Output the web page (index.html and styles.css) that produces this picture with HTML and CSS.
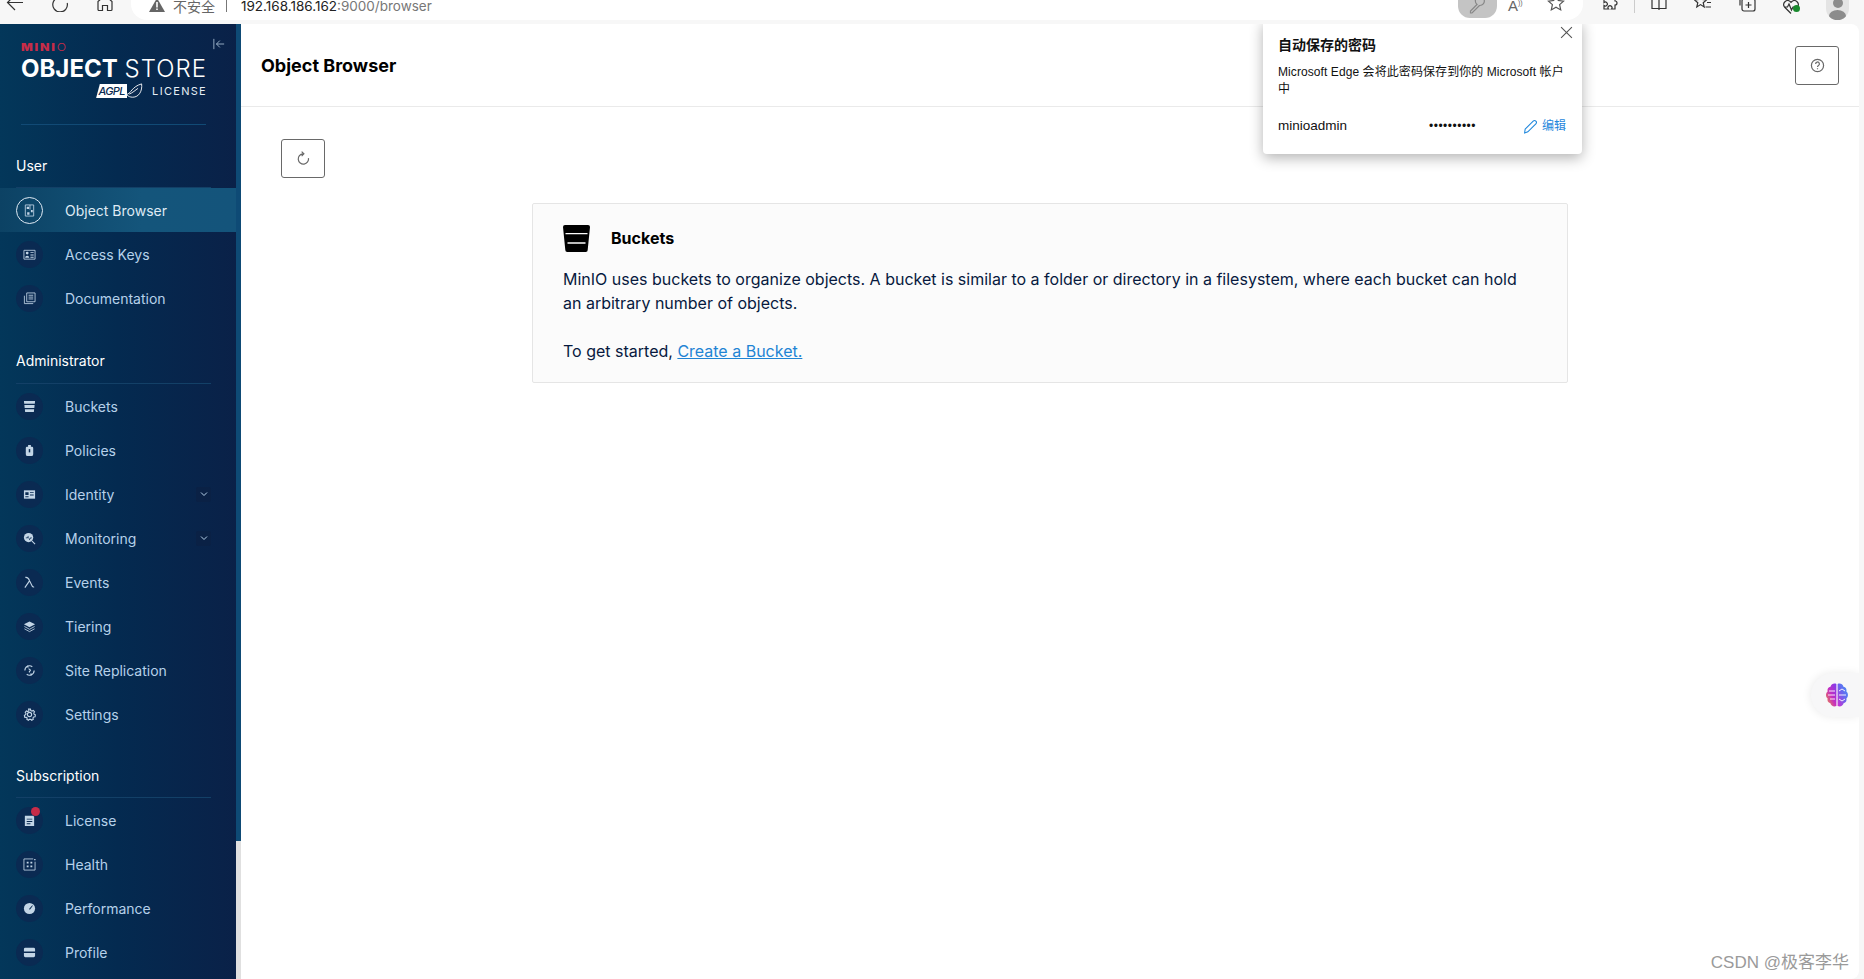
FILE: index.html
```html
<!DOCTYPE html>
<html lang="en">
<head>
<meta charset="utf-8">
<title>MinIO Console</title>
<link rel="stylesheet" href="styles.css">
</head>
<body>
<header class="toolbar">
  <svg class="tb-ic tb-back" viewBox="0 0 18 18"><path d="M9 1 1.500 8.500 9 16M2 8.500h15"/></svg>
  <svg class="tb-ic tb-reload" viewBox="0 0 18 18"><path d="M12.500 -0.500v5h-5M13 4.500A7.300 7.300 0 1 0 16.200 9"/></svg>
  <svg class="tb-ic tb-home" viewBox="0 0 18 18"><path d="M2 7.500 9 1.500l7 6V15.500a1 1 0 0 1-1 1h-3.500v-5h-5v5H3a1 1 0 0 1-1-1z"/></svg>
  <div class="address">
    <svg class="warn" viewBox="0 0 16 14"><path d="M8 0 16 14H0z"/><path class="warn-mark" d="M7.200 4h1.600v5.500H7.200zM7.200 10.500h1.600v1.600H7.200z"/></svg>
    <span class="insecure">不安全</span>
    <span class="addr-sep"></span>
    <span class="url">192.168.186.162<span class="url-dim">:9000/browser</span></span>
    <span class="addr-right">
      <span class="key-btn"><svg class="tb-ic tb-key" viewBox="0 0 18 18"><path d="M10.500 8.500 3 16H1.500v-2L8 7.500a4.500 4.500 0 1 1 2.500 1z"/></svg></span>
      <span class="read-aloud">A<sup>))</sup></span>
      <svg class="tb-ic tb-star" viewBox="0 0 18 18"><path d="m9 1.500 2.300 5 5.200.6-3.900 3.500 1.100 5.300L9 13.200l-4.700 2.700 1.100-5.300L1.500 7.100l5.200-.6z"/></svg>
    </span>
  </div>
  <div class="tb-right">
    <svg class="tb-ic" viewBox="0 0 18 18"><path d="M6 3h2a2 2 0 1 1 3 0h3v4a2 2 0 1 1 0 4v4h-3.500a2 2 0 1 0-3 0H3v-3.500a2 2 0 1 0 0-3V5a2 2 0 0 1 3-2z"/></svg>
    <span class="tb-sep"></span>
    <svg class="tb-ic" viewBox="0 0 18 18"><path d="M2 2h14v12.500H2zM9 2v14"/></svg>
    <svg class="tb-ic" viewBox="0 0 18 18"><path d="m6.500 1.500 1.700 4 4.300.4-3.300 2.800 1 4.200-3.700-2.300-3.700 2.300 1-4.200L.5 5.900l4.300-.4zM11.500 4H17M13 8.500h4M11.500 13H17"/></svg>
    <svg class="tb-ic" viewBox="0 0 18 18"><path d="M5 1.500A3 3 0 0 0 2 4.500v7M6 5h9a2 2 0 0 1 2 2v8a2 2 0 0 1-2 2H6a2 2 0 0 1-2-2V7a2 2 0 0 1 2-2zM10.500 8v6M7.500 11h6"/></svg>
    <span class="heart-wrap">
      <svg class="tb-ic" viewBox="0 0 18 18"><path d="M9 15.500 2.500 9a4 4 0 0 1 5.700-5.500L9 4.300l.8-.8A4 4 0 0 1 15.500 9M2.500 9h3l1.500-3 2.500 6 1.500-3h2"/></svg>
      <i class="heart-dot"></i>
    </span>
    <span class="avatar"><i class="avatar-head"></i><i class="avatar-body"></i></span>
  </div>
</header>

<div class="app">
  <aside class="sidebar">
    <div class="brand">
      <button class="collapse" aria-label="Collapse menu"><svg viewBox="0 0 14 14"><path d="M1 1v12M13 7H4M8 3 4 7l4 4"/></svg></button>
      <div class="minio"><b>MINI</b><span>O</span></div>
      <div class="product"><b>OBJECT</b> <span>STORE</span></div>
      <div class="license-line">
        <span class="agpl"><span class="agpl-text">AGPL</span></span>
        <svg class="agpl-leaf" viewBox="0 0 18 18"><path d="M0 13C5 12 6 4 17 1c1 8-3 15-10 15-3 0-5-1-7-3zM3 12.500C7 11 10 8 13 6"/></svg>
        <span class="license-word">LICENSE</span>
      </div>
    </div>

    <nav>
      <div class="group-title">User</div>
      <a class="item active"><span class="disc"><svg viewBox="0 0 14 14"><path class="ln" d="M2.500 1h9v12h-9zM7.500 1v5"/><path d="M4 3h2.500v2.500H4zM8.500 6.500H10.500V9H8.500zM4.500 9h2.500v2.500H4.500z"/></svg></span><span class="label">Object Browser</span></a>
      <a class="item"><span class="disc"><svg viewBox="0 0 14 14"><path class="ln" d="M1 2.500h12v9.500H1z"/><circle cx="4.500" cy="5.500" r="1.500"/><path d="M2.300 10.500c0-3 4.400-3 4.400 0zM8 4.500h3.500v1H8zM8 7h3.500v1H8zM8 9.500h3.500v1H8z"/></svg></span><span class="label">Access Keys</span></a>
      <a class="item"><span class="disc"><svg viewBox="0 0 14 14"><path class="ln" d="M4 1h9v9.500H4zM1.500 4v8.500H11M6 3.500h5M6 5.500h5M6 7.500h5"/></svg></span><span class="label">Documentation</span></a>

      <div class="group-title">Administrator</div>
      <a class="item"><span class="disc"><svg viewBox="0 0 14 14"><path d="M1 1h12l-.3 3H1.300zM1.500 5.500h11l-.3 3H1.800zM2 10h10l-.3 3H2.300z"/></svg></span><span class="label">Buckets</span></a>
      <a class="item"><span class="disc"><svg viewBox="0 0 14 14"><path d="M5.500 1h3v2H10a1.500 1.500 0 0 1 1 1.500V11a2 2 0 0 1-2 2H5a2 2 0 0 1-2-2V4.500A1.500 1.500 0 0 1 4 3h1.500z"/><path class="cut" d="M6.200 5.500h1.600v3.500H6.200z"/></svg></span><span class="label">Policies</span></a>
      <a class="item"><span class="disc"><svg viewBox="0 0 14 14"><path d="M1 2.500h12v9H1z"/><path class="cut" d="M2.500 4.500h3.500v3H2.500zM2.500 9h3.500v1H2.500zM7.500 4.500h4v1h-4zM7.500 7h4v1h-4z"/></svg></span><span class="label">Identity</span><span class="chev"><svg viewBox="0 0 10 10"><path d="m2 3.500 3 3 3-3"/></svg></span></a>
      <a class="item"><span class="disc"><svg viewBox="0 0 14 14"><circle cx="6" cy="6" r="5"/><path class="cut" d="M3 6h1.500l1-2 1.500 3.500 1-1.500h1.500v.8H8.400L7 9 5.500 5.500l-.5 1.300H3z"/><path class="ln ln-bold" d="m9.500 9.500 3.500 3.500"/></svg></span><span class="label">Monitoring</span><span class="chev"><svg viewBox="0 0 10 10"><path d="m2 3.500 3 3 3-3"/></svg></span></a>
      <a class="item"><span class="disc"><svg viewBox="0 0 14 14"><path class="ln ln-bold" d="M2.500 1.500c2.500-.5 3.500.5 4.500 3.500l3 6c.4.800 1 1 2 .8M6.800 5.500 2 12.500"/></svg></span><span class="label">Events</span></a>
      <a class="item"><span class="disc"><svg viewBox="0 0 14 14"><path d="m7 1.500 6 3.200-6 3.200-6-3.200z"/><path class="ln" d="m1.500 7 5.500 3 5.500-3M1.500 9.500l5.500 3 5.500-3"/></svg></span><span class="label">Tiering</span></a>
      <a class="item"><span class="disc"><svg viewBox="0 0 14 14"><path class="ln ln-bold" d="M2 7a5 5 0 0 1 8-4M12 7a5 5 0 0 1-8 4M5 1.500l.5 2.500M9 12.500 8.500 10M6 5l2 1.500L6.500 9"/></svg></span><span class="label">Site Replication</span></a>
      <a class="item"><span class="disc"><svg viewBox="0 0 14 14"><circle class="ln ln-bold" cx="7" cy="7" r="2.300"/><path class="ln ln-bold" d="M6 1.200h2l.4 1.500 1.300.6 1.400-.7 1.300 1.500-.8 1.300.4 1.300 1.300.7-.3 2-1.500.2-.8 1.200.4 1.400-1.700 1-1.100-1h-1.400l-1.100 1-1.700-1 .4-1.400L3.300 10.100l-1.500-.2-.3-2 1.300-.7.400-1.300-.8-1.300 1.300-1.500 1.400.7 1.300-.6z"/></svg></span><span class="label">Settings</span></a>

      <div class="group-title group-last">Subscription</div>
      <a class="item"><span class="disc"><svg viewBox="0 0 14 14"><path d="M2 2h9l1 1v10H2z"/><path class="cut" d="M4 5h6v1H4zM4 7.500h6v1H4zM4 10h4v1H4z"/></svg><i class="badge"></i></span><span class="label">License</span></a>
      <a class="item"><span class="disc"><svg viewBox="0 0 14 14"><path class="ln" d="M1 1h10M1 1v12h12V4"/><path d="M4 4h2v2H4zM8 4h2v2H8zM4 8h2v2H4zM8 8h2v2H8zM12 1h1.500v1.500H12z"/></svg></span><span class="label">Health</span></a>
      <a class="item"><span class="disc"><svg viewBox="0 0 14 14"><circle cx="7" cy="7" r="6"/><path class="cut" d="M6.500 7.500 10 3.500l.6.500-3.200 4.300z"/></svg></span><span class="label">Performance</span></a>
      <a class="item"><span class="disc"><svg viewBox="0 0 14 14"><path d="M2.500 2h9A1.500 1.500 0 0 1 13 3.500V6H1V3.500A1.500 1.500 0 0 1 2.500 2zM1 7.500h12V10.500A1.500 1.500 0 0 1 11.500 12h-9A1.500 1.500 0 0 1 1 10.500z"/></svg></span><span class="label">Profile</span></a>
    </nav>
  </aside>
  <div class="rail"><div class="rail-thumb"></div></div>

  <main class="content">
    <div class="page-head">
      <h1>Object Browser</h1>
      <button class="square-btn help"><svg viewBox="0 0 16 16"><circle cx="8" cy="8" r="6.500"/><path d="M6 6.300a2 2 0 1 1 3 1.700c-.7.500-1 .8-1 1.700M8 11v1"/></svg></button>
    </div>
    <div class="page-body">
      <div class="actions">
        <button class="square-btn refresh"><svg viewBox="0 0 16 16"><path d="M6 .6 8.400 3 6 5.400M7.500 3A5.500 5.500 0 1 0 13.300 7.500"/></svg></button>
      </div>
      <section class="card">
        <div class="card-head">
          <svg class="card-icon" viewBox="0 0 27 27"><path d="M2 0h23a2 2 0 0 1 2 2l-2.300 23a2 2 0 0 1-2 2H4.300a2 2 0 0 1-2-2L0 2a2 2 0 0 1 2-2z"/><path class="card-icon-line" d="M2.500 8.700h22M4.500 18h18"/></svg>
          <h2>Buckets</h2>
        </div>
        <p>MinIO uses buckets to organize objects. A bucket is similar to a folder or directory in a filesystem, where each bucket can hold an arbitrary number of objects.</p>
        <p class="started">To get started, <a href="#">Create a Bucket.</a></p>
      </section>
    </div>

    <div class="popup">
      <button class="popup-close" aria-label="Close"><svg viewBox="0 0 12 12"><path d="m1 1 10 10M11 1 1 11"/></svg></button>
      <div class="popup-title">自动保存的密码</div>
      <div class="popup-text">Microsoft Edge 会将此密码保存到你的 Microsoft 帐户中</div>
      <div class="popup-row">
        <span class="popup-user">minioadmin</span>
        <span class="popup-pass">••••••••••</span>
        <span class="popup-edit"><svg viewBox="0 0 14 14"><path d="M2 9.500 9.500 2a1.500 1.500 0 0 1 2.500 2.500L4.500 12 1.500 13z"/></svg>编辑</span>
      </div>
    </div>

    <div class="assistant">
      <svg viewBox="0 0 24 24">
        <defs>
          <linearGradient id="brainL" x1="0" y1="1" x2="1" y2="0"><stop offset="0" stop-color="#f0913a"/><stop offset=".5" stop-color="#c62fc0"/><stop offset="1" stop-color="#7a3cf0"/></linearGradient>
          <linearGradient id="brainR" x1="1" y1="0" x2="0" y2="1"><stop offset="0" stop-color="#3f9cf5"/><stop offset=".5" stop-color="#6c63ee"/><stop offset="1" stop-color="#d02fd0"/></linearGradient>
        </defs>
        <path fill="url(#brainL)" d="M11.400 1v22c-2.600 1-5.400 0-6-2.700C3 19.700 2 17.500 2.600 15.500.500 14 .500 10 2.600 8.500 2 6 3.300 4 5.500 3.700 6.300 1 9 0 11.400 1z"/>
        <path fill="url(#brainR)" d="M12.600 1v22c2.600 1 5.400 0 6-2.700 2.400-.6 3.400-2.800 2.800-4.800 2.100-1.500 2.100-5.500 0-7C22 6 20.700 4 18.500 3.700 17.700 1 15 0 12.600 1z"/>
        <path class="brain-lines" d="M4 8h6M3 12h7M5 16h5M14 8l3-2 3 2M14 12h7M14 16l3 2 3-2"/>
      </svg>
    </div>

    <div class="watermark">CSDN @极客李华</div>
  </main>
</div>
</body>
</html>
```
FILE: styles.css
```css
* { box-sizing: border-box; }
html, body { height: 100%; margin: 0; overflow: hidden; }
body {
  display: flex;
  flex-direction: column;
  background: #f7f7f7;
  font-family: Inter, "Noto Sans CJK SC", sans-serif;
  color: #000;
}
button { background: none; padding: 0; border: 0; font: inherit; }

/* browser chrome */
.toolbar {
  flex: 0 0 24px;
  height: 24px;
  display: flex;
  align-items: flex-start;
  overflow: hidden;
  background: #f7f7f7;
}
.tb-ic { width: 18px; height: 18px; fill: none; stroke: #333; stroke-width: 1.200; flex: none; margin-top: -6px; }
.tb-back { margin-left: 6px; }
.tb-reload { margin-left: 27px; }
.tb-home { margin-left: 27px; }
.address {
  margin-left: 17px;
  flex: 0 0 1452px;
  width: 1452px;
  height: 20px;
  background: #fff;
  border-radius: 0 0 16px 16px;
  display: flex;
  align-items: flex-start;
  padding-left: 18px;
  font-family: "Noto Sans CJK SC", sans-serif;
  font-size: 14px;
  line-height: 12px;
}
.warn { width: 16px; height: 14px; margin-top: -2px; fill: #666; flex: none; }
.warn-mark { fill: #fff; }
.insecure { margin-left: 8px; color: #666; }
.addr-sep { width: 1px; height: 14px; background: #777; margin: -2px 14px 0 11px; }
.url { color: #222; font-family: Inter, sans-serif; font-size: 13.500px; }
.url-dim { color: #777; }
.addr-right { margin-left: auto; display: flex; align-items: flex-start; }
.key-btn {
  width: 39px; height: 18px;
  background: #c4c4c4;
  border-radius: 0 0 12px 12px;
  display: flex; justify-content: center;
}
.tb-key { stroke: #888; margin-top: -3px; }
.read-aloud { margin-left: 11px; font-size: 15px; color: #666; width: 22px; font-family: "Liberation Sans", sans-serif; }
.read-aloud sup { font-size: 7px; line-height: 0; vertical-align: 6px; }
.tb-star { margin-left: 17px; margin-right: 18px; stroke: #555; }
.tb-right {
  display: flex;
  align-items: flex-start;
  margin-left: 18px;
  gap: 26px;
}
.tb-sep { width: 1px; height: 13px; background: #ccc; margin: 0 -11px; }
.heart-wrap { position: relative; display: block; margin-top: 0; height: 18px; }
.heart-dot {
  position: absolute; left: 11px; top: 5px;
  width: 7px; height: 7px; border-radius: 50%; background: #1a8a2e;
}
.avatar {
  position: relative; display: block; width: 23px; height: 20px;
  background: #e4e4e4; border-radius: 0 0 12px 12px; overflow: hidden;
}
.avatar-head { position: absolute; left: 7px; top: -2px; width: 10px; height: 10px; border-radius: 50%; background: #8c8c8c; }
.avatar-body { position: absolute; left: 3px; top: 10px; width: 17px; height: 12px; border-radius: 50%; background: #8c8c8c; }

/* app */
.app {
  flex: 1;
  min-height: 0;
  display: flex;
  margin-right: 5px;
  background: #fff;
  border-radius: 0 8px 8px 0;
  overflow: hidden;
}
.sidebar {
  flex: 0 0 236px;
  width: 236px;
  height: 100%;
  overflow: hidden;
  color: #b6d1ea;
  background: linear-gradient(90deg, #03375a 0%, #042a50 50%, #0a2148 100%);
}
.rail { flex: 0 0 5px; background: #e0e0e0; }
.rail-thumb { height: 817px; background: #0e4a75; }

/* brand */
.brand {
  position: relative;
  height: 101px;
  margin: 0 30px 0 21px;
  padding-top: 19px;
  border-bottom: 1px solid #114a75;
  color: #fff;
  white-space: nowrap;
}
.collapse {
  position: absolute; left: 192px; top: 14px;
  width: 12px; height: 12px;
}
.collapse svg { display: block; fill: none; stroke: #a9bfd4; stroke-width: 1; }
.minio {
  height: 9px;
  font-size: 10px;
  line-height: 9px;
  letter-spacing: 1.500px;
  color: #c72c48;
  transform: scaleX(1.230);
  transform-origin: left;
}
.minio b { font-weight: 900; }
.minio span { font-weight: 300; }
.product {
  margin-top: 4px;
  height: 26px;
  font-size: 24px;
  line-height: 26px;
  letter-spacing: 0;
}
.product b { font-weight: 700; }
.product span { font-weight: 300; letter-spacing: 1px; }
.license-line {
  display: flex;
  justify-content: flex-end;
  align-items: center;
  height: 18px;
  margin-top: 0;
}
.agpl {
  display: flex; align-items: center; justify-content: center;
  width: 31px; height: 14px;
  background: #fff;
  clip-path: polygon(12% 0, 100% 0, 100% 100%, 0 100%);
  color: #0a2a50;
  font-size: 11px;
  font-style: italic;
  font-weight: 500;
  letter-spacing: -.7px;
}
.agpl-text { line-height: 14px; }
.agpl-leaf { width: 17px; height: 16px; fill: #0a2a50; stroke: #fff; stroke-width: 1; margin-left: -1px; }
.license-word {
  margin-left: 9px;
  font-size: 11px;
  font-weight: 400;
  letter-spacing: 1.300px;
  color: #e6eef5;
  margin-right: -1px;
}

/* nav */
nav { display: flex; flex-direction: column; }
.group-title {
  margin: 23px 25px 0 16px;
  height: 41px;
  padding-top: 8px;
  line-height: 20px;
  border-bottom: 1px solid #134067;
  color: #fff;
  font-size: 14px;
}
.group-title:first-child { margin-top: 0; padding-top: 31px; height: 63px; }
.group-last { margin-top: 21px; padding-top: 9px; }
.item {
  position: relative;
  display: flex;
  align-items: center;
  height: 44px;
  padding-left: 16px;
  padding-right: 25px;
  font-size: 14px;
}
.active { background: linear-gradient(90deg, #0c4264, #14557b 60%, #14547b); color: #dfeaf4; }
.disc {
  position: relative;
  flex: none;
  width: 27px; height: 27px;
  border-radius: 50%;
  background: #0a2a52;
  display: flex; align-items: center; justify-content: center;
  margin-right: 22px;
}
.active .disc { background: transparent; border: 1px solid #dfeaf4; }
.disc svg { width: 13px; height: 13px; fill: #c3d5e6; }
.disc .ln { fill: none; stroke: #c3d5e6; stroke-width: .9; }
.disc .ln-bold { stroke-width: 1.200; }
.disc .cut { fill: #0a2a52; }
.badge {
  position: absolute; left: 15px; top: 0;
  width: 9px; height: 9px; border-radius: 50%; background: #c72c48;
}
.chev {
  margin-left: auto;
  width: 15px; height: 15px;
  background: #0a2145;
  border-radius: 2px;
  display: flex; align-items: center; justify-content: center;
}
.chev svg { width: 10px; height: 10px; fill: none; stroke: #b6d1ea; stroke-width: 1; }

/* content */
.content { position: relative; flex: 1; min-width: 0; }
.page-head {
  height: 83px;
  padding: 0 20px 0 20px;
  display: flex;
  align-items: center;
  justify-content: space-between;
  border-bottom: 1px solid #eaeaea;
}
h1 { margin: 1px 0 0; font-size: 18px; font-weight: 700; line-height: 24px; }
.square-btn {
  display: flex; align-items: center; justify-content: center;
  border: 1px solid #696969;
  border-radius: 3px;
  background: #fff;
}
.square-btn svg { width: 15px; height: 15px; fill: none; stroke: #696969; stroke-width: 1.300; }
.help { width: 44px; height: 39px; }
.page-body { padding: 32px 0 0 40px; }
.actions { height: 64px; }
.refresh { width: 44px; height: 39px; }
.card {
  width: 1036px;
  height: 180px;
  margin-left: 251px;
  padding: 20px 30px 0;
  background: #fbfbfb;
  border: 1px solid #e5e5e5;
  border-radius: 2px;
  font-size: 16px;
  line-height: 24px;
}
.card-head { display: flex; align-items: center; height: 28px; }
.card-icon { width: 27px; height: 27px; flex: none; fill: #000; margin-right: 21px; }
.card-icon-line { fill: none; stroke: #fbfbfb; stroke-width: 1.300; }
h2 { margin: 0; font-size: 16px; font-weight: 700; line-height: 24px; }
.card p { margin: 15px 0 0; color: #07193e; }
.card .started { margin-top: 24px; }
.card a { color: #1f84d4; }

/* Edge password popup */
.popup {
  position: absolute;
  left: 1022px; top: -4px;
  width: 319px; height: 134px;
  padding: 15px 16px 0 15px;
  background: #fff;
  border-radius: 4px;
  box-shadow: 0 4px 14px rgba(0, 0, 0, .3);
  font-family: "Liberation Sans", "Noto Sans CJK SC", sans-serif;
  color: #111;
}
.popup-close { position: absolute; right: 9px; top: 6px; width: 13px; height: 13px; }
.popup-close svg { display: block; fill: none; stroke: #555; stroke-width: 1; }
.popup-title { font-size: 14px; font-weight: 700; line-height: 20px; }
.popup-text { margin-top: 9px; font-size: 12px; line-height: 17px; letter-spacing: .08px; }
.popup-row { margin-top: 19px; display: flex; align-items: center; font-size: 13.500px; line-height: 18px; }
.popup-user { width: 151px; }
.popup-pass { letter-spacing: .5px; font-size: 12px; }
.popup-edit { margin-left: auto; display: flex; align-items: center; color: #1f87dc; font-size: 12px; }
.popup-edit svg { width: 15px; height: 15px; fill: none; stroke: #1f87dc; stroke-width: 1; margin-right: 4px; }

/* floating bits */
.assistant {
  position: absolute;
  right: 0; top: 649px;
  width: 48px; height: 44px;
  background: #f7f7f8;
  border-radius: 22px 0 0 22px;
  box-shadow: -1px 0 8px rgba(0, 0, 0, .08);
  display: flex; align-items: center;
  padding-left: 14px;
}
.assistant svg { width: 24px; height: 24px; }
.brain-lines { fill: none; stroke: #fff; stroke-width: .9; }
.watermark {
  position: absolute;
  right: 10px; bottom: 5px;
  font-family: "Liberation Sans", "Noto Sans CJK SC", sans-serif;
  font-size: 17px;
  line-height: 22px;
  color: #9a9a9a;
}
```
